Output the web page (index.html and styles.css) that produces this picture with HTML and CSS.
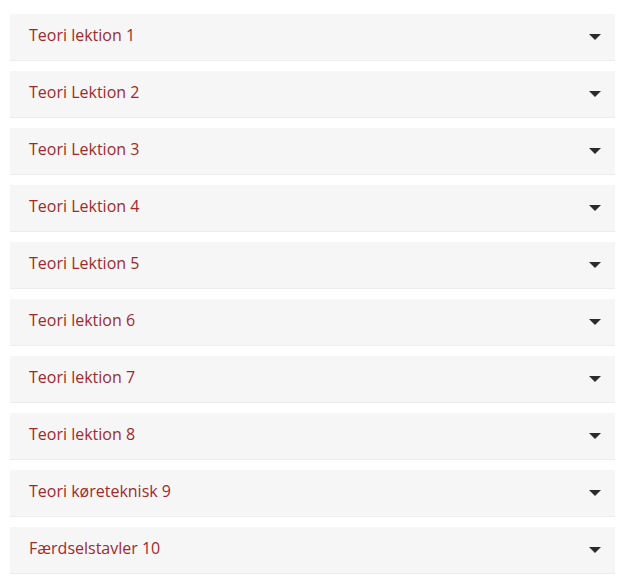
FILE: index.html
```html
<!DOCTYPE html>
<html>
<head>
<meta charset="utf-8">
<link rel="stylesheet" href="styles.css">
</head>
<body>
<div class="accordion">
  <div class="item"><span class="title">Teori lektion 1</span><svg class="caret" width="12" height="6" viewBox="0 0 12 6"><path d="M0 0H12L6 6Z"/></svg></div>
  <div class="item"><span class="title">Teori Lektion 2</span><svg class="caret" width="12" height="6" viewBox="0 0 12 6"><path d="M0 0H12L6 6Z"/></svg></div>
  <div class="item"><span class="title">Teori Lektion 3</span><svg class="caret" width="12" height="6" viewBox="0 0 12 6"><path d="M0 0H12L6 6Z"/></svg></div>
  <div class="item"><span class="title">Teori Lektion 4</span><svg class="caret" width="12" height="6" viewBox="0 0 12 6"><path d="M0 0H12L6 6Z"/></svg></div>
  <div class="item"><span class="title">Teori Lektion 5</span><svg class="caret" width="12" height="6" viewBox="0 0 12 6"><path d="M0 0H12L6 6Z"/></svg></div>
  <div class="item"><span class="title">Teori lektion 6</span><svg class="caret" width="12" height="6" viewBox="0 0 12 6"><path d="M0 0H12L6 6Z"/></svg></div>
  <div class="item"><span class="title">Teori lektion 7</span><svg class="caret" width="12" height="6" viewBox="0 0 12 6"><path d="M0 0H12L6 6Z"/></svg></div>
  <div class="item"><span class="title">Teori lektion 8</span><svg class="caret" width="12" height="6" viewBox="0 0 12 6"><path d="M0 0H12L6 6Z"/></svg></div>
  <div class="item"><span class="title">Teori køreteknisk 9</span><svg class="caret" width="12" height="6" viewBox="0 0 12 6"><path d="M0 0H12L6 6Z"/></svg></div>
  <div class="item"><span class="title">Færdselstavler 10</span><svg class="caret" width="12" height="6" viewBox="0 0 12 6"><path d="M0 0H12L6 6Z"/></svg></div>
</div>
</body>
</html>
```
FILE: styles.css
```css
html, body {
  margin: 0;
  padding: 0;
  background: #ffffff;
}
body {
  font-family: "Open Sans", "Liberation Sans", sans-serif;
}
.accordion {
  display: flex;
  flex-direction: column;
  gap: 10px;
  padding: 14px 7px 0 10px;
}
.item {
  height: 46px;
  border-bottom: 1px solid #ececec;
  background: #f6f6f6;
  display: flex;
  align-items: center;
  justify-content: space-between;
  padding: 0 14px 0 19px;
}
.title {
  font-size: 16px;
  color: #9e2a2d;
  line-height: 20px;
  margin-bottom: 5px;
}
.caret {
  fill: #2b2b2b;
  display: block;
  margin-bottom: 1px;
}
```
